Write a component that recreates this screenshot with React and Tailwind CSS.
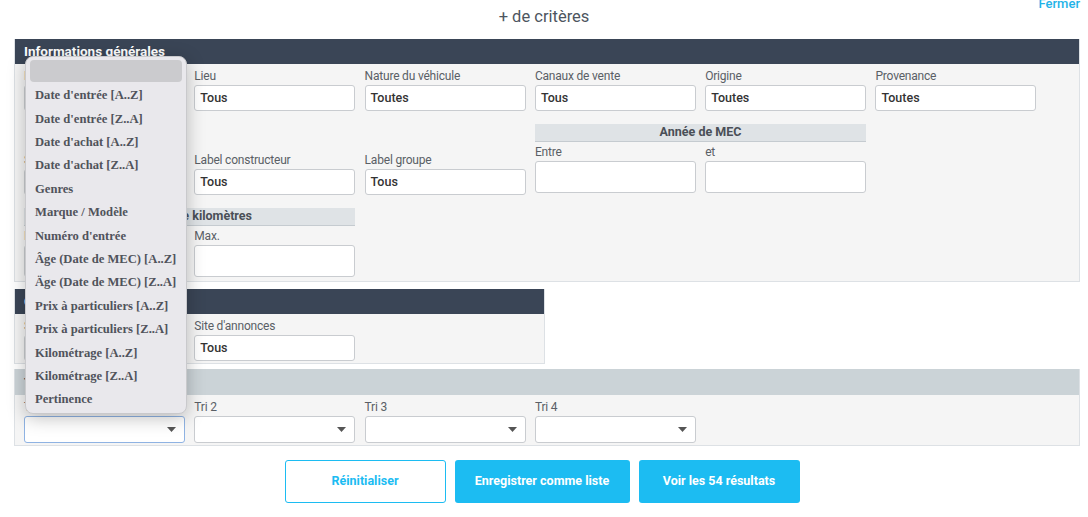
import React from "react";

const F = { fontFamily: "Roboto, 'Noto Sans', sans-serif" };

function Field({ label, value, tall }) {
  return (
    <div className="flex flex-col">
      <div className="text-[12px] leading-[18px] text-[#5a5f66] tracking-[-0.2px]">{label}</div>
      <div
        className={`bg-white border border-[#c9ccd0] rounded-[3px] px-[5px] flex items-center text-[12.5px] font-medium text-[#333] ${
          tall ? "h-[32px]" : "h-[26px]"
        }`}
      >
        {value}
      </div>
    </div>
  );
}

function Select({ label, focused }) {
  return (
    <div className="flex flex-col">
      <div className="text-[12px] leading-[18px] text-[#5a5f66] tracking-[-0.2px]">{label}</div>
      <div
        className={`bg-white rounded-[3px] h-[27px] flex items-center justify-end pr-[8px] border ${
          focused ? "border-[#8fb3e3]" : "border-[#c9ccd0]"
        }`}
      >
        <svg width="9" height="5" viewBox="0 0 9 5">
          <path d="M0 0 L9 0 L4.5 5 Z" fill="#555" />
        </svg>
      </div>
    </div>
  );
}

function SubHeader({ children }) {
  return (
    <div className="h-[18px] bg-[#dfe3e6] border-b border-[#c5cbd0] text-[12.5px] font-bold text-[#4a4f57] flex items-center justify-center">
      {children}
    </div>
  );
}

const options = [
  "Date d'entrée [A..Z]",
  "Date d'entrée [Z..A]",
  "Date d'achat [A..Z]",
  "Date d'achat [Z..A]",
  "Genres",
  "Marque / Modèle",
  "Numéro d'entrée",
  "Âge (Date de MEC) [A..Z]",
  "Äge (Date de MEC) [Z..A]",
  "Prix à particuliers [A..Z]",
  "Prix à particuliers [Z..A]",
  "Kilométrage [A..Z]",
  "Kilométrage [Z..A]",
  "Pertinence",
];

export default function App() {
  return (
    <div className="relative w-[1088px] h-[517px] bg-white overflow-hidden" style={F}>
      <div className="relative h-[39px] flex items-center justify-center">
        <div className="text-[16.5px] text-[#4d5560] -mt-[5px]">+ de critères</div>
        <div className="absolute right-[8px] -top-[6px] text-[13px] font-medium text-[#1fb3e8]">Fermer</div>
      </div>

      <div className="ml-[14px] w-[1066px]">
        {/* Section 1 */}
        <div className="border border-[#dde1e5] border-t-0 bg-[#f5f5f5]">
          <div className="h-[25px] bg-[#3a4556] text-white text-[13.5px] font-bold flex items-center pl-[9px]">
            Informations générales
          </div>
          <div className="pl-[9px] pt-[3px] pb-[4px]">
            <div className="grid grid-cols-[repeat(6,161px)] gap-x-[9.3px]">
              <Field label="Parc" value="Tous" />
              <Field label="Lieu" value="Tous" />
              <Field label="Nature du véhicule" value="Toutes" />
              <Field label="Canaux de vente" value="Tous" />
              <Field label="Origine" value="Toutes" />
              <Field label="Provenance" value="Toutes" />
            </div>
            <div className="grid grid-cols-[repeat(6,161px)] gap-x-[9.3px] mt-[13px] items-end">
              <div>
                <Field label="Statut" value="Tous" />
              </div>
              <Field label="Label constructeur" value="Tous" />
              <Field label="Label groupe" value="Tous" />
              <div className="col-span-2 flex flex-col mb-[2px]">
                <SubHeader>Année de MEC</SubHeader>
                <div className="grid grid-cols-2 gap-x-[9.3px] mt-[1px]">
                  <Field label="Entre" value="" tall />
                  <Field label="et" value="" tall />
                </div>
              </div>
            </div>
            <div className="grid grid-cols-[repeat(6,161px)] gap-x-[9.3px] mt-[13px]">
              <div className="col-span-2 flex flex-col">
                <SubHeader>Nombre de kilomètres</SubHeader>
                <div className="grid grid-cols-2 gap-x-[9.3px] mt-[1px]">
                  <Field label="Min." value="" tall />
                  <Field label="Max." value="" tall />
                </div>
              </div>
            </div>
          </div>
        </div>

        {/* Section 2 */}
        <div className="mt-[7px] w-[531px] border border-[#dde1e5] border-t-0 bg-[#f5f5f5]">
          <div className="h-[25px] bg-[#3a4556] text-white text-[13.5px] font-bold flex items-center pl-[9px]">
            Communication
          </div>
          <div className="pl-[9px] pt-[3px] pb-[2px] grid grid-cols-[repeat(3,161px)] gap-x-[9.3px]">
            <Field label="Statut d'annonce" value="Tous" />
            <Field label="Site d'annonces" value="Tous" />
          </div>
        </div>

        {/* Section 3 */}
        <div className="mt-[5px] border border-[#dde1e5] border-t-0 bg-[#f5f5f5]">
          <div className="h-[26px] bg-[#cbd3d7] text-[#4a4f57] text-[13.5px] font-bold flex items-center pl-[9px]">
            Tri
          </div>
          <div className="pl-[9px] pt-[3px] pb-[2px] grid grid-cols-[repeat(6,161px)] gap-x-[9.3px]">
            <Select label="Tri 1" focused />
            <Select label="Tri 2" />
            <Select label="Tri 3" />
            <Select label="Tri 4" />
          </div>
        </div>
      </div>

      {/* Buttons */}
      <div className="mt-[14px] flex justify-center gap-[9px] pr-[4px]">
        <button className="w-[161px] h-[43px] rounded-[3px] border border-[#1cbcf2] bg-white text-[#1cbcf2] text-[12.5px] font-bold">
          Réinitialiser
        </button>
        <button className="w-[175px] h-[43px] rounded-[3px] bg-[#1cbcf2] text-white text-[12.5px] font-bold">
          Enregistrer comme liste
        </button>
        <button className="w-[161px] h-[43px] rounded-[3px] bg-[#1cbcf2] text-white text-[12.5px] font-bold">
          Voir les 54 résultats
        </button>
      </div>

      {/* Dropdown overlay */}
      <div
        className="absolute left-[25px] top-[56px] w-[162px] h-[358px] bg-[#e9e8ec] rounded-[8px] border border-[#c9c9cc] shadow-[0_4px_18px_rgba(0,0,0,0.25)] px-[4px] pt-[3px]"
        style={{ fontFamily: "'Liberation Serif', 'Times New Roman', serif" }}
      >
        <div className="h-[22px] bg-[#cbcbce] rounded-[4px]" />
        <div className="mt-[2px]">
          {options.map((o) => (
            <div key={o} className="h-[23.4px] flex items-center pl-[5px] text-[12.6px] font-bold text-[#50535b] whitespace-nowrap">
              {o}
            </div>
          ))}
        </div>
      </div>
    </div>
  );
}
